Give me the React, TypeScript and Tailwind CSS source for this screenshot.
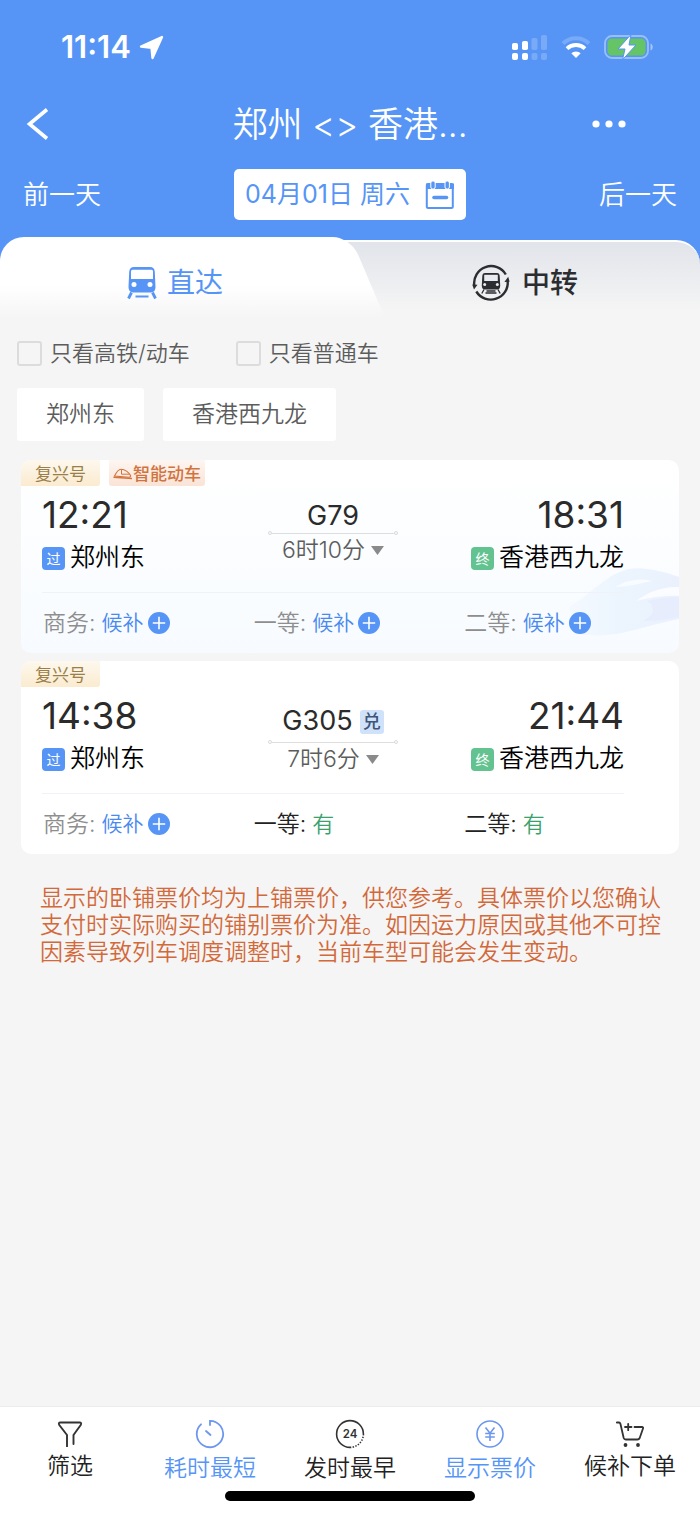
import { useState } from "react";
import type { ReactNode } from "react";

const BLUE = "#5695f6";

function StatusIcons() {
  return (
    <div className="flex items-center gap-[13px]">
      <svg width="36" height="27" viewBox="0 0 36 27" fill="#fff" aria-hidden="true">
        <rect x="0" y="9" width="6" height="7" rx="1.8" />
        <rect x="10" y="7" width="6" height="9" rx="1.8" />
        <g opacity="0.2">
          <rect x="19.500" y="4" width="6" height="12" rx="1.800" />
          <rect x="29" y="1" width="6" height="15" rx="1.800" />
          <rect x="19.500" y="19" width="6" height="7" rx="2" />
          <rect x="29" y="19" width="6" height="7" rx="2" />
        </g>
        <rect x="0" y="19" width="6" height="7" rx="2" />
        <rect x="10" y="19" width="6" height="7" rx="2" />
      </svg>
      <svg width="30" height="24" viewBox="0 0 30 24" fill="none" aria-hidden="true">
        <path d="M2 8.500a18.500 18.500 0 0 1 26 0" stroke="#fff" strokeOpacity="0.2" strokeWidth="4" />
        <path d="M6 13.600a13 13 0 0 1 18 0" stroke="#fff" strokeWidth="3.800" />
        <path d="M10.300 18.300a6.800 6.800 0 0 1 9.400 0L15 23z" fill="#fff" />
      </svg>
      <svg width="50" height="26" viewBox="0 0 50 26" aria-hidden="true">
        <rect x="1" y="2" width="43" height="22" rx="7" fill="none" stroke="#fff" strokeOpacity="0.4" strokeWidth="1.800" />
        <rect x="3.500" y="4.500" width="38" height="17" rx="4.500" fill="#64c466" />
        <path d="M46.500 9.500c3 1 3 6 0 7z" fill="#fff" fillOpacity="0.45" />
        <path d="M27 .5 14 15h7L18.500 25.800 32 11h-7z" fill="#fff" stroke={BLUE} strokeWidth="1" strokeLinejoin="round" />
      </svg>
    </div>
  );
}

function CalendarIcon() {
  return (
    <svg width="30" height="30" viewBox="0 0 30 30" aria-hidden="true">
      <rect x="1.800" y="4" width="26" height="24" rx="1.500" fill="none" stroke={BLUE} strokeWidth="2" />
      <path d="M1 3.500h28v5.500H1z" fill={BLUE} />
      <rect x="5.800" y="1" width="4.400" height="8" rx="2" fill={BLUE} stroke="#fff" strokeWidth="1" />
      <rect x="20" y="1" width="4.400" height="8" rx="2" fill={BLUE} stroke="#fff" strokeWidth="1" />
      <path d="M9 17.500h12.500" stroke={BLUE} strokeWidth="3.600" strokeLinecap="round" />
    </svg>
  );
}

function TrainIcon() {
  return (
    <svg width="30" height="34" viewBox="0 0 30 34" aria-hidden="true">
      <path d="M7 1h16q4.500 0 4.800 5l.7 15q0 5-4.500 5.500H6Q1.500 26 1.500 21L2.200 6Q2.500 1 7 1z" fill={BLUE} />
      <path d="M5.500 3.800h19q1.500 0 1.500 1.500V13H4V5.300Q4 3.800 5.500 3.800z" fill="#fff" />
      <circle cx="7" cy="18.500" r="2.500" fill="#fff" />
      <circle cx="23" cy="18.500" r="2.500" fill="#fff" />
      <path d="M4.500 26.500 1.500 32.500M25.500 26.500l3 6" stroke={BLUE} strokeWidth="2.800" />
      <path d="M8.500 30.500h13" stroke={BLUE} strokeWidth="2" />
    </svg>
  );
}

function TransferIcon() {
  return (
    <svg width="38" height="38" viewBox="0 0 38 38" aria-hidden="true">
      <g fill="none" stroke="#2b2d30" strokeWidth="2.400">
        <path d="M2.300 21.500A17 17 0 0 1 33.800 10.500" />
        <path d="M35.700 17A17 17 0 0 1 4.300 27.500" />
      </g>
      <path d="m.2 20.500 5.300.2L2 25.500zM37.600 17.800l-5.200.2 3.800-5.200z" fill="#2b2d30" />
      <path d="M13 9h12q2.500 0 2.700 3l.5 9.500q0 4-3 4H12.800q-3 0-3-4l.5-9.500Q10.500 9 13 9z" fill="#2b2d30" />
      <path d="M12.200 10.800h13.600V17H12.200z" fill="#e8ebf1" />
      <circle cx="12.700" cy="20.500" r="1.500" fill="#e8ebf1" />
      <circle cx="25.300" cy="20.500" r="1.500" fill="#e8ebf1" />
      <path d="m12 25.500-2.200 4M26 25.500l2.200 4M14.500 27h9M13.500 29h11" stroke="#2b2d30" strokeWidth="1.300" />
    </svg>
  );
}

function BulletTrainIcon() {
  return (
    <svg width="20" height="12" viewBox="0 0 20 12" fill="none" stroke="#d4743c" aria-hidden="true">
      <path d="M1.500 8C3 5 5 1.200 8 1.200c4 0 8.500 3.800 9.500 6.300q.5 1.500-1.500 1.700z" strokeWidth="1.100" />
      <path d="M8.500 1.500v4.700h8" strokeWidth="1" />
      <path d="M.5 9.300q9 .6 18.500 1.200" strokeWidth="1.500" />
    </svg>
  );
}

function TrainWatermark() {
  return (
    <svg className="absolute right-0 bottom-4 z-0" width="110" height="72" viewBox="0 0 110 72" aria-hidden="true">
      <defs>
        <linearGradient id="hull" x1="0" y1="0" x2="1" y2="0">
          <stop offset="0" stopColor="#f4f9ff" />
          <stop offset="0.45" stopColor="#ecf5fe" />
          <stop offset="1" stopColor="#eaf1fd" />
        </linearGradient>
      </defs>
      <path d="M0 42C14 34 26 22 38 14 52 4 66 2 78 4q16 2 32 8v42C86 58 62 68 38 70 24 71 12 70 6 68z" fill="url(#hull)" />
      <path d="M110 22C92 21 78 28 67 36c14-3 28-6 43-5z" fill="#fafcff" />
      <path d="M46 22C58 14 74 13 84 16 72 18 60 22 46 22z" fill="#f8fbff" />
      <path d="M78 36q16-4 32-4v20q-18 4-36 4 18-10 4-20z" fill="#e7edfd" />
    </svg>
  );
}

function PlusBadge() {
  return (
    <svg width="22" height="22" viewBox="0 0 22 22" aria-hidden="true">
      <circle cx="11" cy="11" r="11" fill={BLUE} />
      <path d="M4.800 11h12.400M11 4.800v12.400" stroke="#fff" strokeWidth="1.600" />
    </svg>
  );
}

type Train = {
  no: string;
  smart: boolean;
  exchange: boolean;
  depart: string;
  arrive: string;
  duration: string;
  seats: { name: string; available: boolean }[];
};

const trains: Train[] = [
  {
    no: "G79",
    smart: true,
    exchange: false,
    depart: "12:21",
    arrive: "18:31",
    duration: "6时10分",
    seats: [
      { name: "商务", available: false },
      { name: "一等", available: false },
      { name: "二等", available: false },
    ],
  },
  {
    no: "G305",
    smart: false,
    exchange: true,
    depart: "14:38",
    arrive: "21:44",
    duration: "7时6分",
    seats: [
      { name: "商务", available: false },
      { name: "一等", available: true },
      { name: "二等", available: true },
    ],
  },
];

function Stop({ kind, name }: { kind: "过" | "终"; name: string }) {
  return (
    <div className="flex h-[42px] items-center gap-[5px] text-[25px] font-[350] text-black">
      <span
        className={
          "flex size-[23px] items-center justify-center rounded-[4px] text-[14px] font-normal text-white " +
          (kind === "过" ? "bg-[#5695f6]" : "bg-[#62c290]")
        }
      >
        {kind}
      </span>
      {name}
    </div>
  );
}

function TrainCard({ train }: { train: Train }) {
  return (
    <article
      className={
        "relative flex h-[193px] flex-col overflow-hidden rounded-[10px] " +
        (train.smart ? "bg-linear-to-b from-white to-[#f7fbff]" : "bg-white")
      }
    >
      {train.smart && <TrainWatermark />}
      <div className="relative flex h-[26px] gap-[9px] text-[17px]/[28px]">
        <span className="w-[79px] rounded-br-[3px] bg-linear-to-b from-[#fdf8ee] to-[#fbebcf] text-center text-[#9a7f4a]">
          复兴号
        </span>
        {train.smart && (
          <span className="flex w-24 items-center justify-center rounded-b-[3px] bg-linear-to-b from-[#fdf6f2] to-[#fae3d6] pt-px font-medium text-[#d0743f]">
            <BulletTrainIcon />
            智能动车
          </span>
        )}
      </div>
      <div className="relative mr-[55px] ml-[21px] flex h-[107px] justify-between border-b border-[#eff2f6]">
        <div className="pt-2">
          <div className="h-[43px] text-[37px]/[42px] text-[#2b2b2b]">{train.depart}</div>
          <Stop kind="过" name="郑州东" />
        </div>
        <div className="absolute inset-x-0 top-4 mx-auto flex w-[130px] flex-col items-center">
          <div className={"flex items-center gap-[7px] text-[27px] text-[#2b2b2b] " + (train.exchange ? "h-[37px]" : "h-[29px]")}>
            {train.no}
            {train.exchange && (
              <span className="flex size-6 items-center justify-center rounded-[3px] bg-[#cfe2fa] text-[18px] font-medium text-[#3f5578]">
                兑
              </span>
            )}
          </div>
          <div className="flex w-full items-center">
            <span className="size-1 rounded-full border border-[#dadada]" />
            <span className="h-px flex-1 bg-[#dedede]" />
            <span className="size-1 rounded-full border border-[#dadada]" />
          </div>
          <button type="button" className="flex h-[30px] items-center gap-1.5 text-[23px] font-[350] whitespace-nowrap text-[#5c5c5c]">
            {train.duration}
            <svg width="13" height="9" viewBox="0 0 13 9" fill="#8a8a8a" aria-hidden="true">
              <path d="M0 0h13L6.500 9z" />
            </svg>
          </button>
        </div>
        <div className="flex flex-col items-end pt-2">
          <div className="h-[43px] text-[37px]/[42px] text-[#2b2b2b]">{train.arrive}</div>
          <Stop kind="终" name="香港西九龙" />
        </div>
      </div>
      <div className="relative mr-1 ml-[22px] grid flex-1 grid-cols-3 items-center text-[23px] font-[350]">
        {train.seats.map((s) => (
          <div key={s.name} className={"flex items-center gap-1.5 " + (s.available ? "text-[#222]" : "text-[#8e8e8e]")}>
            <span>{s.name}:</span>
            {s.available ? (
              <span className="text-[22px] text-[#3aa06c]">有</span>
            ) : (
              <button type="button" className="flex items-center gap-1 text-[21px] text-[#4a8af0]">
                候补
                <PlusBadge />
              </button>
            )}
          </div>
        ))}
      </div>
    </article>
  );
}

function FilterCheck({ label }: { label: string }) {
  return (
    <label className="flex items-center gap-2">
      <input
        type="checkbox"
        className="size-[25px] appearance-none rounded-[3px] border-2 border-[#dcdcdc] checked:bg-[#5695f6]"
      />
      {label}
    </label>
  );
}

function NavItem({ icon, label, active }: { icon: ReactNode; label: string; active?: boolean }) {
  return (
    <button
      type="button"
      className={"flex flex-col items-center gap-1 text-[23px]/[30px] font-[350] " + (active ? "text-[#5695f6]" : "text-[#222]")}
    >
      {icon}
      {label}
    </button>
  );
}

const funnelIcon = (
  <svg width="28" height="28" viewBox="0 0 28 28" fill="none" stroke="#333" strokeWidth="1.900" strokeLinecap="round" aria-hidden="true">
    <path d="M11 27.500V16L3.300 6Q2 3.500 4.500 3.500h19Q26 3.500 24.700 6L17.500 16v9" />
  </svg>
);

const timerIcon = (
  <svg width="30" height="30" viewBox="0 0 30 30" fill="none" stroke="#6d97ee" strokeWidth="1.800" strokeLinecap="round" aria-hidden="true">
    <path d="M15 6V1.800A13.200 13.200 0 1 1 6 5.300" />
    <path d="m11 12 4.500 4" />
  </svg>
);

const clock24Icon = (
  <svg width="30" height="30" viewBox="0 0 30 30" fill="none" stroke="#333" strokeWidth="1.600" aria-hidden="true">
    <path d="M15 28.400A13.400 13.400 0 1 1 28.400 15" />
    <path d="M28.400 15A13.400 13.400 0 0 1 15 28.400" strokeDasharray="1.400 1.400" />
    <text x="15" y="19.200" textAnchor="middle" fontSize="11.500" fontWeight="600" fill="#333" stroke="none">
      24
    </text>
  </svg>
);

const yenIcon = (
  <svg width="30" height="30" viewBox="0 0 30 30" fill="none" stroke="#6d97ee" strokeWidth="1.600" aria-hidden="true">
    <circle cx="15" cy="15" r="13" />
    <path d="m10.500 8.500 4.500 5.800 4.500-5.800M15 14.300V22M10.200 14.500h9.600M10.200 18h9.600" />
  </svg>
);

const cartIcon = (
  <svg width="28" height="28" viewBox="0 0 28 28" fill="none" stroke="#333" strokeWidth="1.800" strokeLinecap="round" strokeLinejoin="round" aria-hidden="true">
    <path d="M.8 3.500H3q1 0 1.400 1.300L7.700 19q.5 1.500 2 1.500h11.800q1.500 0 2.200-1.500L27 9.500Q27.500 8 26 8h-7.500" />
    <path d="M9 8h6.500M12.200 4.800v6.400" />
    <circle cx="9.500" cy="26" r="1" fill="#333" />
    <circle cx="22" cy="26" r="1" fill="#333" />
  </svg>
);

export default function App() {
  const [tab, setTab] = useState<"direct" | "transfer">("direct");

  return (
    <div className="flex min-h-screen flex-col bg-[#f5f5f5] font-['Inter','Noto_Sans_CJK_SC',sans-serif]">
      <header className="bg-[#5695f6] pb-[17px] text-white">
        <div className="flex h-[94px] items-center justify-between pr-[46px] pl-[61px]">
          <div className="flex items-center gap-2 text-[31px] font-semibold">
            11:14
            <svg width="25" height="25" viewBox="0 0 25 25" fill="#fff" stroke="#fff" strokeWidth="2.400" strokeLinejoin="round" aria-hidden="true">
              <path d="M23 2 2 11.500l10.500 1.200 1 10.300z" />
            </svg>
          </div>
          <StatusIcons />
        </div>
        <div className="grid h-[60px] grid-cols-[120px_1fr_120px] items-center">
          <button type="button" aria-label="返回" className="pl-[26px]">
            <svg width="24" height="32" viewBox="0 0 24 32" fill="none" stroke="#fff" strokeWidth="3.600" aria-hidden="true">
              <path d="M21 1.500 3.500 16 21 30.500" />
            </svg>
          </button>
          <h1 className="text-center text-[35px] font-[350] whitespace-nowrap">郑州 &lt;&gt; 香港...</h1>
          <button type="button" aria-label="更多" className="pl-3">
            <svg width="34" height="8" viewBox="0 0 34 8" fill="#fff" aria-hidden="true">
              <circle cx="4" cy="4" r="3.600" />
              <circle cx="17" cy="4" r="3.600" />
              <circle cx="30" cy="4" r="3.600" />
            </svg>
          </button>
        </div>
        <div className="mt-[15px] flex items-center justify-between px-[23px] text-[26px] font-[350]">
          <button type="button">前一天</button>
          <button type="button" className="flex h-[51px] items-center gap-[15px] rounded-[5px] bg-white px-[11px] text-[25px] font-normal text-[#5695f6]">
            <span>04月01日 周六</span>
            <CalendarIcon />
          </button>
          <button type="button">后一天</button>
        </div>
      </header>

      <div className="bg-linear-to-b from-[#5695f6] from-50% to-[#f5f5f5] to-50%">
        <div role="tablist" className="relative grid h-[81px] grid-cols-2 text-[28px]">
          <div className="absolute inset-x-0 top-[3px] bottom-0 rounded-t-[24px] border-t-2 border-white bg-linear-to-b from-[#e1e4ea] to-[#f5f5f5] to-90%" />
          <div className="absolute inset-y-0 left-0 w-[45%] rounded-tl-[24px] bg-linear-to-b from-white from-60% to-[#f5f5f5]" />
          <div className="absolute inset-y-0 left-1/4 w-[30%] origin-bottom-right skew-x-[23deg] rounded-tr-[18px] bg-linear-to-b from-white from-60% to-[#f5f5f5]" />
          <button
            type="button"
            role="tab"
            aria-selected={tab === "direct"}
            onClick={() => setTab("direct")}
            className="relative flex items-center justify-center gap-2.5 pt-2.5 text-[#5695f6]"
          >
            <TrainIcon />
            直达
          </button>
          <button
            type="button"
            role="tab"
            aria-selected={tab === "transfer"}
            onClick={() => setTab("transfer")}
            className="relative flex items-center justify-center gap-3 pt-2.5 font-medium text-[#2b2d30]"
          >
            <TransferIcon />
            中转
          </button>
        </div>
      </div>

      <main className="flex flex-1 flex-col">
        <div className="flex h-[70px] items-center gap-[46px] px-[17px] text-[22px] font-[350] text-[#5c5c5c]">
          <FilterCheck label="只看高铁/动车" />
          <FilterCheck label="只看普通车" />
        </div>
        <div className="flex gap-[19px] px-[17px] text-[23px] font-[350] text-[#5c5c5c]">
          <button type="button" className="h-[53px] rounded-[3px] bg-white px-[29px]">
            郑州东
          </button>
          <button type="button" className="h-[53px] rounded-[3px] bg-white px-[29px]">
            香港西九龙
          </button>
        </div>
        <section className="mt-[19px] flex flex-col gap-2 px-[21px]">
          {trains.map((t) => (
            <TrainCard key={t.no} train={t} />
          ))}
        </section>
        <p className="mt-[31px] pr-9 pl-10 text-[23px]/[27px] font-[350] text-[#d2693a]">
          显示的卧铺票价均为上铺票价，供您参考。具体票价以您确认支付时实际购买的铺别票价为准。如因运力原因或其他不可控因素导致列车调度调整时，当前车型可能会发生变动。
        </p>
      </main>

      <footer className="border-t border-[#ececec] bg-white">
        <nav className="grid grid-cols-5 items-start pt-3">
          <NavItem icon={funnelIcon} label="筛选" />
          <NavItem icon={timerIcon} label="耗时最短" active />
          <NavItem icon={clock24Icon} label="发时最早" />
          <NavItem icon={yenIcon} label="显示票价" active />
          <NavItem icon={cartIcon} label="候补下单" />
        </nav>
        <div className="mx-auto mt-2 mb-3.5 h-2.5 w-[250px] rounded-full bg-black" />
      </footer>
    </div>
  );
}
